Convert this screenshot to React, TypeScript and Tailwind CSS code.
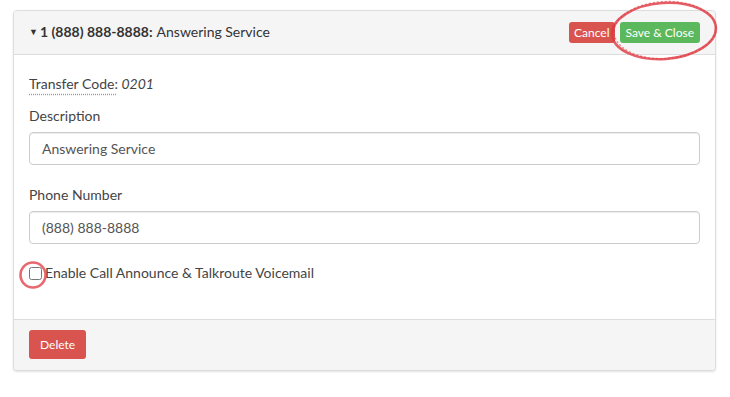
import React from "react";

const font = { fontFamily: "Lato, 'Open Sans', sans-serif" };

function Field({ label, value }: { label: string; value: string }) {
  return (
    <div className="flex flex-col">
      <label className="text-[14px] leading-[20px] text-[#444]">{label}</label>
      <input
        readOnly
        value={value}
        className="mt-[6px] h-[33px] w-full rounded-[4px] border border-[#ccc] bg-white px-[12px] text-[14px] text-[#555] outline-none shadow-[inset_0_1px_1px_rgba(0,0,0,0.075)]"
        style={font}
      />
    </div>
  );
}

export default function App() {
  return (
    <div className="relative min-h-[397px] bg-white pt-[10px] pl-[13px]" style={font}>
      <div className="w-[703px] overflow-hidden rounded-[4px] border border-[#ddd] bg-white shadow-[0_1px_2px_rgba(0,0,0,0.12)]">
        {/* Header */}
        <div className="flex h-[44px] items-center justify-between border-b border-[#ddd] bg-[#f5f5f5] pl-[15px] pr-[15px]">
          <div className="mb-[2px] flex items-center text-[14px] text-[#333]">
            <span className="mr-[2px] text-[9px] leading-none">▼</span>
            <span className="font-bold">1 (888) 888-8888:</span>
            <span className="ml-[4px]">Answering Service</span>
          </div>
          <div className="flex items-center gap-[5px]">
            <button className="h-[21px] rounded-[3px] bg-[#d9534f] px-[5px] text-[12px] leading-[21px] text-white">
              Cancel
            </button>
            <button className="h-[21px] rounded-[3px] bg-[#5cb85c] px-[6px] text-[12px] leading-[21px] text-white">
              Save &amp; Close
            </button>
          </div>
        </div>

        {/* Body */}
        <div className="px-[15px] pt-[19px] pb-[36px]">
          <p className="text-[14px] leading-[20px] text-[#444]">
            <span className="underline decoration-dotted decoration-[#999] underline-offset-[5px]">Transfer Code:</span>{" "}
            <em>0201</em>
          </p>
          <div className="mt-[12px]">
            <Field label="Description" value="Answering Service" />
          </div>
          <div className="mt-[20px]">
            <Field label="Phone Number" value="(888) 888-8888" />
          </div>
          <label className="mt-[19px] flex items-center text-[14px] leading-[20px] text-[#444]">
            <input type="checkbox" className="m-0 mr-[3px] h-[13px] w-[13px]" />
            Enable Call Announce &amp; Talkroute Voicemail
          </label>
        </div>

        {/* Footer */}
        <div className="border-t border-[#ddd] bg-[#f5f5f5] px-[15px] pt-[10px] pb-[11px]">
          <button className="h-[29px] rounded-[3px] bg-[#d9534f] px-[11px] text-[12px] text-white">Delete</button>
        </div>
      </div>

      {/* hand-drawn highlight marks */}
      <svg className="pointer-events-none absolute left-0 top-0" width="730" height="397">
        <ellipse
          cx="664"
          cy="31"
          rx="52"
          ry="28"
          transform="rotate(-4 664 31)"
          fill="none"
          stroke="#e0363f"
          strokeWidth="2.6"
          opacity="0.8"
        />
        <ellipse
          cx="665"
          cy="30"
          rx="51"
          ry="28.5"
          transform="rotate(-3 665 30)"
          fill="none"
          stroke="#e0363f"
          strokeWidth="1.2"
          strokeDasharray="2 2"
          opacity="0.6"
        />
        <ellipse cx="33" cy="275" rx="12.5" ry="12.5" fill="none" stroke="#e0363f" strokeWidth="2.6" opacity="0.75" />
      </svg>
    </div>
  );
}
